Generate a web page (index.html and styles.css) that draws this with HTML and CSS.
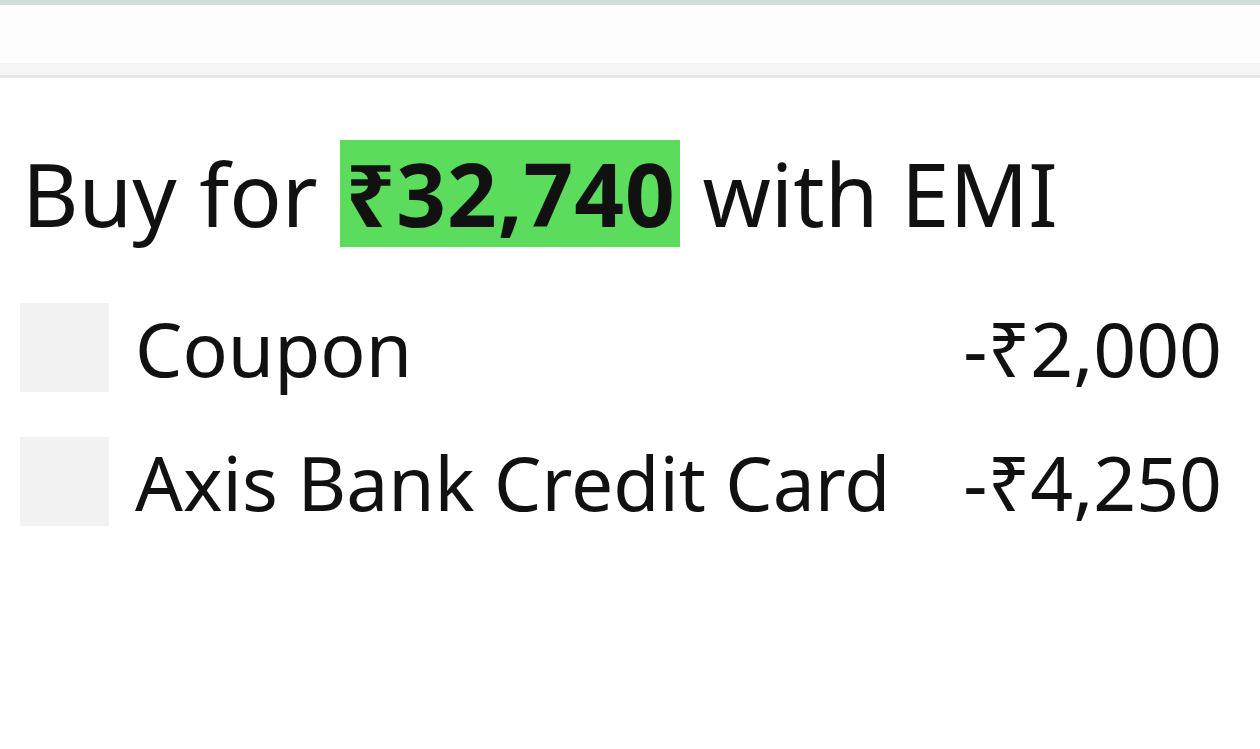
FILE: index.html
```html
<!DOCTYPE html>
<html lang="en">
<head>
<meta charset="UTF-8">
<title>Buy with EMI</title>
<link rel="stylesheet" href="styles.css">
</head>
<body>

<div class="status-strip"></div>
<div class="toolbar"></div>

<div class="container">
  <h1 class="emi-title">Buy for <span class="price">₹32,740</span> with EMI</h1>

  <div class="offer-list">
    <div class="offer">
      <div class="offer-box"></div>
      <span class="offer-name">Coupon</span>
      <span class="offer-amount">-₹2,000</span>
    </div>
    <div class="offer">
      <div class="offer-box"></div>
      <span class="offer-name">Axis Bank Credit Card</span>
      <span class="offer-amount">-₹4,250</span>
    </div>
  </div>
</div>

</body>
</html>
```

FILE: styles.css
```css
body { margin: 0; font-family: 'Noto Sans', 'DejaVu Sans', sans-serif; background: #fff; color: #111; overflow: hidden; }
.status-strip { height: 5px; background: #d3ddd9; }
.toolbar {
  height: 58px;
  background: #fdfdfd;
  border-bottom: 12px solid #f5f5f5;
  box-shadow: 0 3px 0 #e6e6e6;
}
.container { padding: 65px 38px 0 20px; }
.emi-title {
  margin: 0 0 0 2px;
  font-size: 87px;
  font-weight: normal;
  line-height: 107px;
  white-space: nowrap;
}
.price {
  display: inline-block;
  background: #5cdc5c;
  font-weight: bold;
  letter-spacing: 1px;
  padding: 0 4px 0 5px;
}
.offer-list { display: flex; flex-direction: column; gap: 45px; margin-top: 56px; }
.offer { display: flex; align-items: center; height: 89px; }
.offer-box { width: 89px; height: 89px; background: #f2f2f2; flex-shrink: 0; }
.offer-name { font-size: 75px; margin-left: 26px; flex: 1; }
.offer-amount { font-size: 75px; }
```
